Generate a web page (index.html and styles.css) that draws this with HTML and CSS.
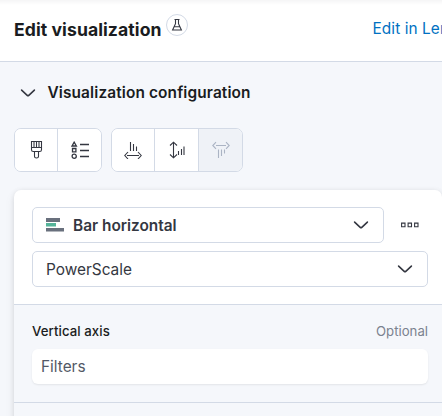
FILE: index.html
```html
<!DOCTYPE html>
<html lang="en">
<head>
<meta charset="utf-8">
<title>Edit visualization</title>
<link rel="stylesheet" href="styles.css">
</head>
<body>
<header class="header">
  <h1 class="title">Edit visualization</h1>
  <span class="beta"><svg width="14" height="14" viewBox="0 0 14 14"><path d="M4.500 1.500h5M5.500 1.500v4.200L2.600 12h8.800L8.500 5.700V1.500M4.200 8.800h5.600"/></svg></span>
  <a class="lens-link">Edit in Lens</a>
</header>
<main class="content">
  <div class="accordion">
    <svg class="chevron" width="16" height="16" viewBox="0 0 16 16"><path d="M1.600 5.100 7.200 10.300Q8 11 8.800 10.300L14.400 5.100"/></svg>
    <h2 class="section-title">Visualization configuration</h2>
  </div>
  <div class="toolbar">
    <div class="group">
      <button class="tool"><svg width="18" height="18" viewBox="0 0 18 18"><path d="M4.500 .500h10v8.200q0 1.800-1.800 1.800H6.300q-1.800 0-1.800-1.800zM4.500 6.500h10M7 .500v6M9.500 .500v6M12 .500v6M7.500 10.500v5q0 1.500 2 1.500t2-1.500v-5"/></svg></button>
      <button class="tool"><svg class="bold" width="18" height="18" viewBox="0 0 18 18"><path d="M3.200 1.200 1 5h4.400zM1.500 7.500h3.400v3.400H1.500zM9 3.500h9M9 9.500h9M9 15.500h9"/><circle cx="3.200" cy="15.200" r="2.100"/></svg></button>
    </div>
    <div class="group">
      <button class="tool"><svg width="18" height="18" viewBox="0 0 18 18"><path d="M6.500 1v9M9.500 3v7M12.500 5.500V10M3 14.500h12M4 11 .8 14.500 4 18M14 11l3.200 3.500L14 18"/></svg></button>
      <button class="tool"><svg width="18" height="18" viewBox="0 0 18 18"><path d="M5.500 2v14M2 4.500 5.500 1.200 9 4.500M2 13.500l3.500 3.300L9 13.500M10.500 10v4M13.500 8v6M16 5.500V14"/></svg></button>
      <button class="tool disabled"><svg width="18" height="18" viewBox="0 0 18 18"><path d="M4 4.500h10M4 1.200.8 4.500 4 7.800M14 1.200l3.200 3.300L14 7.800M6.500 8.500V17M9.500 8.500v6.500M12.500 8.500v4"/></svg></button>
    </div>
  </div>
  <section class="panel">
    <div class="panel-top">
      <div class="row">
        <div class="select chart-type">
          <svg class="bars" width="18" height="14" viewBox="0 0 18 14"><path fill="#69707d" d="M0 0h14v4H0zM0 10h18v3.500H0z"/><path fill="#54b399" d="M0 5h10v3.500H0z"/></svg>
          <span class="select-name">Bar horizontal</span>
          <svg class="chevron" width="16" height="16" viewBox="0 0 16 16"><path d="M1.600 5.100 7.200 10.300Q8 11 8.800 10.300L14.400 5.100"/></svg>
        </div>
        <svg class="more" width="18" height="6" viewBox="0 0 18 6"><path d="M.6 1.100h3.400v3.700H.6zM7.100 1.100h3.400v3.700H7.100zM13.600 1.100H17v3.700h-3.400z"/></svg>
      </div>
      <div class="select source">
        <span>PowerScale</span>
        <svg class="chevron" width="16" height="16" viewBox="0 0 16 16"><path d="M1.600 5.100 7.200 10.300Q8 11 8.800 10.300L14.400 5.100"/></svg>
      </div>
    </div>
    <div class="axis">
      <div class="axis-label"><span class="axis-name">Vertical axis</span><span class="optional">Optional</span></div>
      <div class="dimension">Filters</div>
    </div>
    <div class="axis"></div>
  </section>
</main>
</body>
</html>
```
FILE: styles.css
```css
* { box-sizing: border-box; }
body {
  margin: 0;
  height: 416px;
  overflow: hidden;
  background: #f5f7fb;
  color: #343741;
  font-family: Inter, "Liberation Sans", sans-serif;
  font-size: 15px;
}
svg { display: block; flex: none; fill: none; stroke: #343741; stroke-width: 1.1; }
.header {
  display: flex;
  align-items: flex-start;
  width: 442px;
  height: 62px;
  padding-left: 14px;
  border-bottom: 1px solid #d3dae6;
  background: linear-gradient(#f5f5f6, #fff 5px);
  overflow: hidden;
  white-space: nowrap;
}
.title { flex: none; margin: 18px 0 0; width: 152px; font-size: 17.600px; line-height: 24px; font-weight: 700; letter-spacing: 0.07px; color: #1a1c21; }
.beta { display: flex; align-items: center; justify-content: center; flex: none; width: 22px; height: 22px; margin-top: 14px; border: 1px solid #d3dae6; border-radius: 50%; }
.lens-link { flex: none; margin: 19px 0 0 184.500px; line-height: 20px; font-size: 15.400px; letter-spacing: 0.08px; color: #0071c2; }
.accordion { display: flex; align-items: center; gap: 12px; height: 62px; padding-left: 19.500px; }
.chevron { stroke-width: 1.600; stroke-linecap: round; }
.bold { stroke-width: 1.300; }
.section-title { margin: 0; font-size: 15.400px; line-height: 24px; font-weight: 600; letter-spacing: 0.13px; color: #1a1c21; }
.toolbar { display: flex; gap: 9px; margin: 4px 0 0 14px; }
.group { display: flex; height: 44px; border: 1px solid #d3dae6; border-radius: 7px; background: #fff; overflow: hidden; }
.tool { display: flex; align-items: center; justify-content: center; width: 42px; padding: 0; border: 0; background: #fff; }
.tool + .tool { width: 44px; border-left: 1px solid #d3dae6; }
.tool.disabled { background: #eff2f7; }
.disabled svg { stroke: #abb4c4; }
.panel { margin: 18px 0 0 14px; width: 428px; height: 240px; border-radius: 7px 7px 0 0; background: #fff; box-shadow: 0 1px 5px rgba(0,0,0,.1), 0 4px 12px rgba(0,0,0,.06); overflow: hidden; }
.panel-top { height: 114px; padding: 17px 14px 0 18px; }
.row { display: flex; align-items: center; gap: 17px; margin-bottom: 8px; }
.select { display: flex; align-items: center; justify-content: space-between; height: 36px; padding: 0 14px 0 13px; border: 1px solid #d3dae6; border-radius: 5px; background: #fff; font-size: 15.400px; }
.chart-type { width: 352px; gap: 9px; }
.bars { stroke: none; }
.select-name { flex: 1; font-weight: 600; }
.axis { height: 98px; padding: 17px 14px 0 18px; border-top: 1px solid #d3dae6; background: #f5f7fb; }
.axis-label { display: flex; justify-content: space-between; line-height: 18px; font-size: 13.200px; margin-bottom: 9px; }
.axis-name { font-weight: 500; letter-spacing: 0.08px; color: #1a1c21; }
.optional { color: #7b828f; }
.dimension { height: 35px; padding-left: 9px; border-radius: 6px; background: #fff; box-shadow: 0 1px 2px rgba(0,0,0,.08); font-size: 15.400px; line-height: 35px; color: #535966; }
```
